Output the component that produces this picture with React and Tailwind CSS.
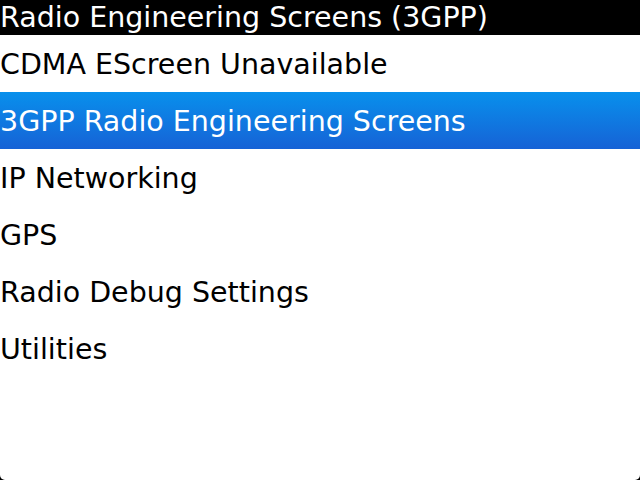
export default function App() {
  const items = [
    "CDMA EScreen Unavailable",
    "3GPP Radio Engineering Screens",
    "IP Networking",
    "GPS",
    "Radio Debug Settings",
    "Utilities",
  ];
  return (
    <div className="w-[640px] h-[480px] bg-black flex flex-col overflow-hidden" style={{ fontFamily: '"DejaVu Sans", sans-serif' }}>
      <div className="h-[35px] shrink-0 bg-black text-white text-[28.5px] leading-[34px] pt-[1px] whitespace-nowrap">
        Radio Engineering Screens (3GPP)
      </div>
      <div className="flex-1 bg-white rounded-b-[5px] flex flex-col">
        {items.map((t, i) => (
          <div
            key={t}
            className={
              i === 1
                ? "h-[57px] shrink-0 flex items-center pt-[4px] text-[28.5px] text-white bg-gradient-to-b from-[#0890ec] to-[#1662d6] whitespace-nowrap"
                : "h-[57px] shrink-0 flex items-center pt-[4px] text-[28.5px] text-black whitespace-nowrap"
            }
          >
            {t}
          </div>
        ))}
      </div>
    </div>
  );
}
